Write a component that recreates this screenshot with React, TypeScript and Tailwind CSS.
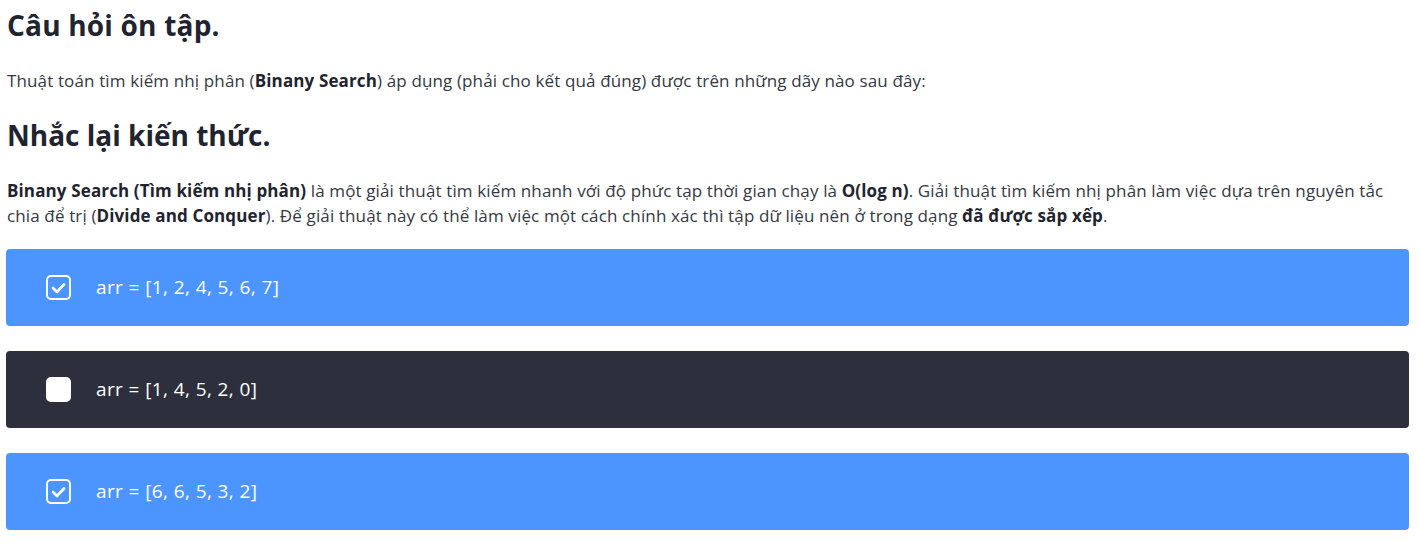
import React from "react";

const font = { fontFamily: "'Open Sans', 'Noto Sans', sans-serif" };

function CheckBox({ checked }: { checked: boolean }) {
  if (!checked) {
    return <span className="block w-[25px] h-[25px] rounded-[5px] bg-white" />;
  }
  return (
    <span className="flex items-center justify-center w-[25px] h-[25px] rounded-[5px] border-2 border-white">
      <svg width="15" height="12" viewBox="0 0 15 12" fill="none">
        <path d="M2 6 L6 10 L13 2.5" stroke="white" strokeWidth="2.6" strokeLinecap="round" strokeLinejoin="round" />
      </svg>
    </span>
  );
}

function Option({ label, checked }: { label: string; checked: boolean }) {
  return (
    <div
      className={`flex items-center h-[77px] rounded-[4px] pl-[40px] gap-[25px] text-white text-[19px] tracking-[0.4px] ${
        checked ? "bg-[#4c95fe]" : "bg-[#2d303c]"
      }`}
    >
      <CheckBox checked={checked} />
      <span>{label}</span>
    </div>
  );
}

export default function App() {
  return (
    <main className="min-h-screen bg-white text-[#1f2430] pl-[6px] pr-[10px] pt-[7px]" style={font}>
      <h2 className="text-[28px] font-bold leading-[36px] pl-px tracking-[0.2px]">Câu hỏi ôn tập.</h2>
      <p className="mt-[25px] text-[17px] leading-[25px] pl-px tracking-[0.13px] text-[#343845]">
        Thuật toán tìm kiếm nhị phân (<b className="text-[#1f2430]">Binany Search</b>) áp dụng (phải cho kết quả đúng) được trên những dãy nào sau đây:
      </p>
      <h2 className="mt-[24px] text-[28px] font-bold leading-[36px] pl-px">Nhắc lại kiến thức.</h2>
      <p className="mt-[25px] text-[17px] leading-[25px] pl-px tracking-[0.13px] text-[#343845]">
        <b className="text-[#1f2430]">Binany Search (Tìm kiếm nhị phân)</b> là một giải thuật tìm kiếm nhanh với độ phức tạp thời gian chạy là{" "}
        <b className="text-[#1f2430]">O(log n)</b>. Giải thuật tìm kiếm nhị phân làm việc dựa trên nguyên tắc chia để trị (
        <b className="text-[#1f2430]">Divide and Conquer</b>). Để giải thuật này có thể làm việc một cách chính xác thì tập dữ liệu nên ở trong dạng{" "}
        <b className="text-[#1f2430]">đã được sắp xếp</b>.
      </p>
      <div className="mt-[21px] flex flex-col gap-[25px] pb-[27px]">
        <Option label="arr = [1, 2, 4, 5, 6, 7]" checked />
        <Option label="arr = [1, 4, 5, 2, 0]" checked={false} />
        <Option label="arr = [6, 6, 5, 3, 2]" checked />
      </div>
    </main>
  );
}
